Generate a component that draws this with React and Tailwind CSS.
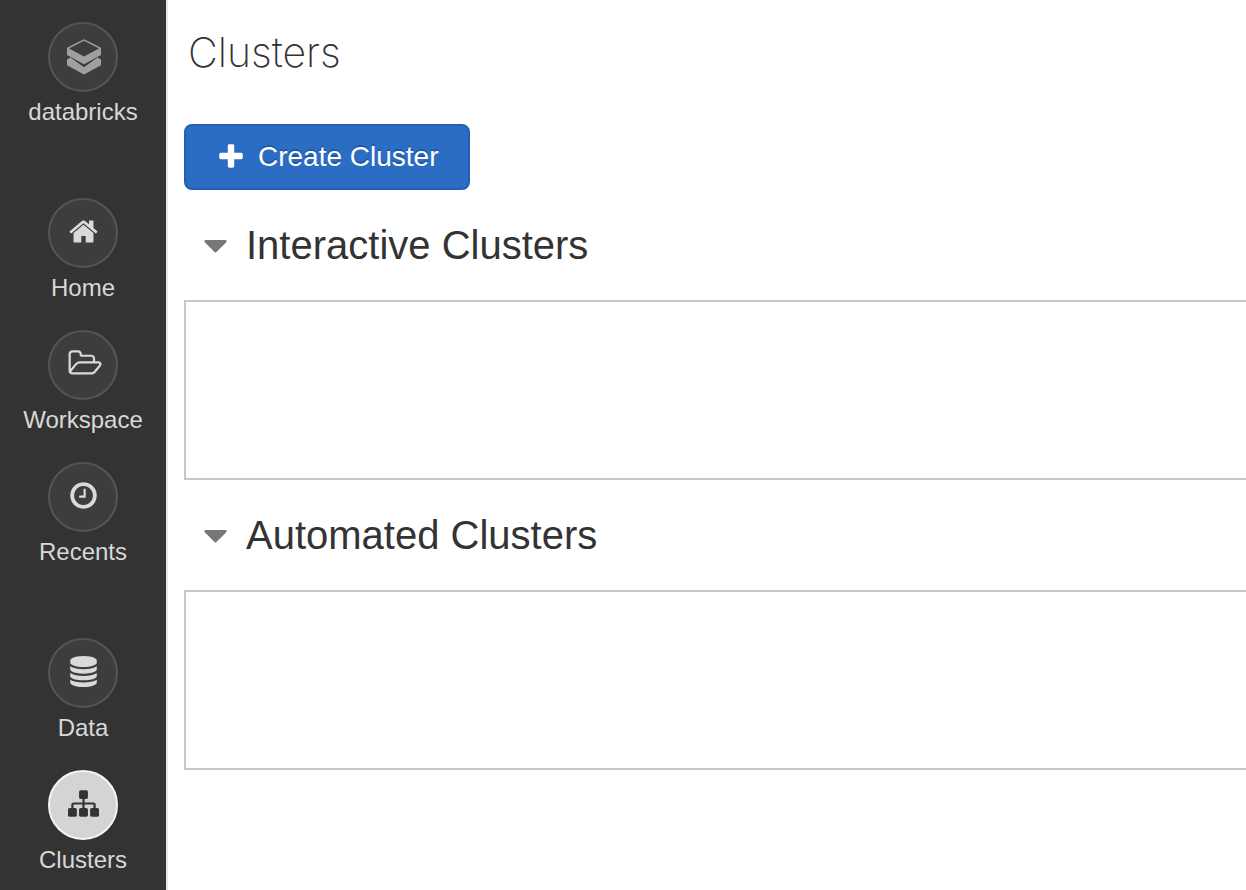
import { useState } from "react";

function Glyph({ d, viewBox = "0 0 1792 1792", className = "size-[31px]" }) {
  return (
    <svg viewBox={viewBox} className={`shrink-0 overflow-visible ${className}`} fill="currentColor" aria-hidden="true">
      <path d={d} />
    </svg>
  );
}

const paths = {
  home: "M1472 992v480q0 26-19 45t-45 19h-384v-384h-256v384h-384q-26 0-45-19t-19-45v-480q0-1 .5-3t.5-3l575-474 575 474q1 2 1 6zm223-69l-62 74q-8 9-21 11h-3q-13 0-21-7l-692-577-692 577q-12 8-24 7-13-2-21-11l-62-74q-8-10-7-23.5t11-21.5l719-599q32-26 76-26t76 26l244 204v-195q0-14 9-23t23-9h192q14 0 23 9t9 23v408l219 182q10 8 11 21.5t-7 23.5z",
  folder:
    "M1717 931q0-35-53-35h-1088q-40 0-85.5 21.5t-71.5 52.5l-294 363q-18 24-18 40 0 35 53 35h1088q40 0 86-22t71-53l294-363q18-22 18-39zm-1141-163h768v-160q0-40-28-68t-68-28h-576q-40 0-68-28t-28-68v-64q0-40-28-68t-68-28h-320q-40 0-68 28t-28 68v853l256-315q44-53 116-87.5t140-34.5zm1269 163q0 62-46 120l-295 363q-43 53-116 87.5t-140 34.5h-1088q-92 0-158-66t-66-158v-960q0-92 66-158t158-66h320q92 0 158 66t66 158v32h544q92 0 158 66t66 158v160h192q54 0 99 24.5t67 70.5q15 32 15 68z",
  clock:
    "M1024 544v448q0 14-9 23t-23 9h-320q-14 0-23-9t-9-23v-64q0-14 9-23t23-9h224v-352q0-14 9-23t23-9h64q14 0 23 9t9 23zm416 352q0-148-73-273t-198-198-273-73-273 73-198 198-73 273 73 273 198 198 273 73 273-73 198-198 73-273zm224 0q0 209-103 385.5t-279.5 279.5-385.5 103-385.5-103-279.5-279.5-103-385.5 103-385.5 279.5-279.5 385.5-103 385.5 103 279.5 279.5 103 385.5z",
  database:
    "M896 768q237 0 443-43t325-127v170q0 69-103 128t-280 93.5-385 34.5-385-34.5-280-93.5-103-128v-170q119 84 325 127t443 43zm0 768q237 0 443-43t325-127v170q0 69-103 128t-280 93.5-385 34.5-385-34.5-280-93.5-103-128v-170q119 84 325 127t443 43zm0-384q237 0 443-43t325-127v170q0 69-103 128t-280 93.5-385 34.5-385-34.5-280-93.5-103-128v-170q119 84 325 127t443 43zm0-1152q208 0 385 34.5t280 93.5 103 128v128q0 69-103 128t-280 93.5-385 34.5-385-34.5-280-93.5-103-128v-128q0-69 103-128t280-93.5 385-34.5z",
  sitemap:
    "M1792 1248v320q0 40-28 68t-68 28h-320q-40 0-68-28t-28-68v-320q0-40 28-68t68-28h96v-192h-512v192h96q40 0 68 28t28 68v320q0 40-28 68t-68 28h-320q-40 0-68-28t-28-68v-320q0-40 28-68t68-28h96v-192h-512v192h96q40 0 68 28t28 68v320q0 40-28 68t-68 28h-320q-40 0-68-28t-28-68v-320q0-40 28-68t68-28h96v-192q0-52 38-90t90-38h512v-192h-96q-40 0-68-28t-28-68v-320q0-40 28-68t68-28h320q40 0 68 28t28 68v320q0 40-28 68t-68 28h-96v192h512q52 0 90 38t38 90v192h96q40 0 68 28t28 68z",
  plus: "M1600 736v192q0 40-28 68t-68 28h-416v416q0 40-28 68t-68 28h-192q-40 0-68-28t-28-68v-416h-416q-40 0-68-28t-28-68v-192q0-40 28-68t68-28h416v-416q0-40 28-68t68-28h192q40 0 68 28t28 68v416h416q40 0 68 28t28 68z",
  caret: "M1408 704q0 26-19 45l-448 448q-19 19-45 19t-45-19l-448-448q-19-19-19-45t19-45 45-19h896q26 0 45 19t19 45z",
};

function BricksLogo() {
  return (
    <svg viewBox="0 0 34 36" className="mt-1 ml-px h-9 w-[34px] shrink-0" fill="#a0a0a0" aria-hidden="true">
      <path fillRule="evenodd" d="M17 .3 34 8.800V16L17 25.300 0 16V8.800ZM17 1.800 2 9.500 17 17.600 32 9.500Z" />
      <path d="M0 20.400 3.400 18.600 17 28.200 30.600 18.600 34 20.400V26.200L17 35.600 0 26.200Z" />
    </svg>
  );
}

function NavItem({ label, active = false, children }) {
  return (
    <a href="#" aria-current={active ? "page" : undefined} className="flex flex-col items-center gap-1.5">
      <span
        className={
          active
            ? "flex size-[70px] items-center justify-center rounded-full border-2 border-[#f5f5f4] bg-[#d4d4d2] pb-1 pl-px text-[#333333]"
            : "flex size-[70px] items-center justify-center rounded-full border-2 border-[#555555] bg-[#3d3d3d] pb-1 pl-px text-[#dadada]"
        }
      >
        {children}
      </span>
      <span className="text-2xl leading-7 text-[#d8d8d8]">{label}</span>
    </a>
  );
}

function Section({ title }) {
  const [open, setOpen] = useState(true);
  return (
    <section>
      <h2 className="flex h-[110px] items-center pl-3 text-[40px] leading-12 text-[#333333]">
        <button type="button" aria-expanded={open} onClick={() => setOpen(!open)} className="flex items-center gap-[11px]">
          <Glyph d={paths.caret} className={open ? "size-[39px] text-[#777777]" : "size-[39px] -rotate-90 text-[#777777]"} />
          {title}
        </button>
      </h2>
      {open && <div className="h-[180px] border-2 border-r-0 border-[#c8c8c8]" />}
    </section>
  );
}

export default function App() {
  return (
    <div className="flex min-h-screen bg-white font-['Liberation_Sans',Arial,sans-serif]">
      <nav className="flex w-[168px] shrink-0 flex-col gap-[72px] border-r-2 border-[#e8e8e8] bg-[#333333] pt-[22px]">
        <NavItem label="databricks">
          <BricksLogo />
        </NavItem>
        <div className="flex flex-col gap-7">
          <NavItem label="Home">
            <Glyph d={paths.home} />
          </NavItem>
          <NavItem label="Workspace">
            <Glyph d={paths.folder} viewBox="-96 0 1792 1792" />
          </NavItem>
          <NavItem label="Recents">
            <Glyph d={paths.clock} />
          </NavItem>
        </div>
        <div className="flex flex-col gap-7">
          <NavItem label="Data">
            <Glyph d={paths.database} />
          </NavItem>
          <NavItem label="Clusters" active>
            <Glyph d={paths.sitemap} />
          </NavItem>
        </div>
      </nav>
      <main className="min-w-0 flex-1 pt-6 pl-4">
        <h1 className="mb-11 pl-1 font-['Inter',sans-serif] text-[41px] leading-14 font-extralight text-[#333333]">Clusters</h1>
        <button
          type="button"
          className="flex h-[66px] items-center gap-3 rounded-lg border-2 border-[#245fb5] bg-[#2b6cc4] pr-[29px] pl-[30px] text-[28px] leading-8 text-white [text-shadow:0_-2px_0_rgba(0,0,0,0.2)]"
        >
          <Glyph d={paths.plus} className="size-[30px]" />
          Create Cluster
        </button>
        <Section title="Interactive Clusters" />
        <Section title="Automated Clusters" />
      </main>
    </div>
  );
}
